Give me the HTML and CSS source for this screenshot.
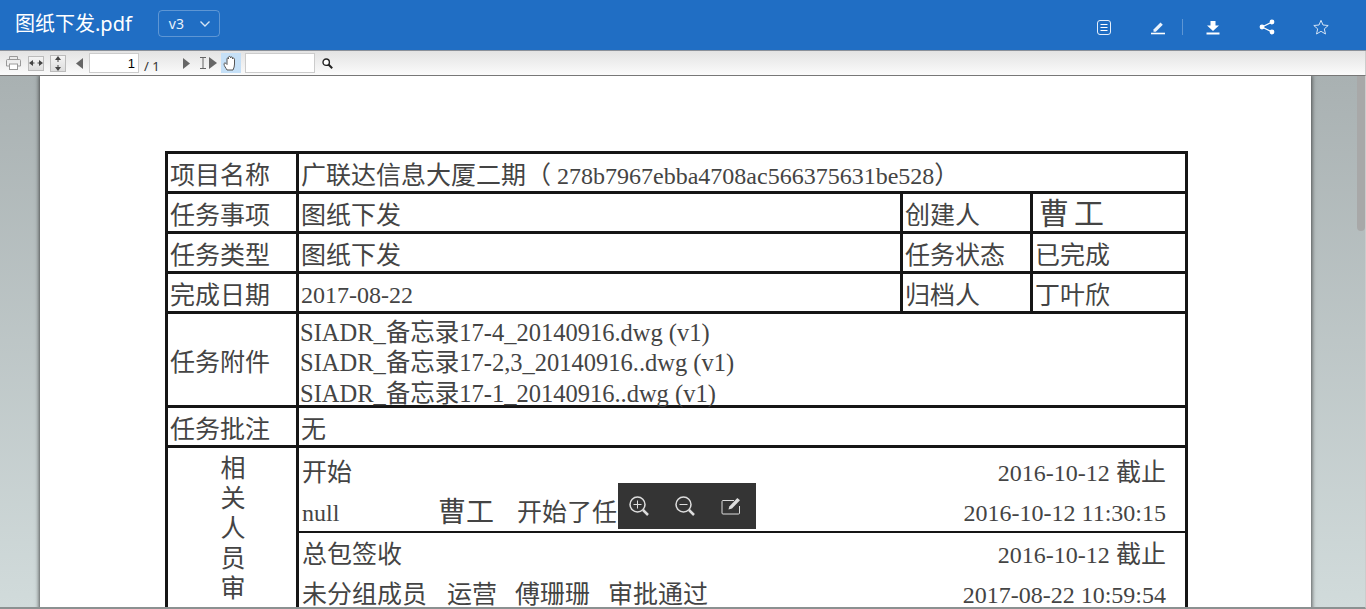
FILE: index.html
```html
<!DOCTYPE html>
<html lang="zh">
<head>
<meta charset="utf-8">
<title>图纸下发.pdf</title>
<link rel="stylesheet" href="styles.css">
</head>
<body>
<div class="app">
  <header class="topbar">
    <div class="doc-title">图纸下发.pdf</div>
    <div class="version"><span>v3</span>
      <svg class="chev" width="12" height="8" viewBox="0 0 12 8"><path d="M1.5 1.5 6 6l4.5-4.5" fill="none" stroke="#d5e4f5" stroke-width="1.4"/></svg>
    </div>
    <div class="actions">
      <svg class="act" width="16" height="16" viewBox="0 0 16 16"><rect x="1.5" y="1.5" width="13" height="14" rx="2.5" fill="none" stroke="#e4eefa" stroke-width="1"/><path d="M4.5 5.5h7M4.5 8.5h7M4.5 11.5h7" stroke="#fff" stroke-width="1"/></svg>
      <svg class="act" width="16" height="16" viewBox="0 0 16 16"><path d="M3.500 10.500 10.500 3.600l2.300 2.200-7 7H3.500z" fill="#eaf2fb"/><path d="M1 14.500h14" stroke="#fff" stroke-width="1.600"/></svg>
      <span class="divider"></span>
      <svg class="act" width="16" height="16" viewBox="0 0 16 16"><path d="M5.500 2h5v4.500H14L8 12 2 6.500h3.500z" fill="#fff"/><path d="M1.500 14.500h13" stroke="#fff" stroke-width="2"/></svg>
      <svg class="act" width="16" height="16" viewBox="0 0 16 16"><path d="M13 3 3 8l10 5" fill="none" stroke="#fff" stroke-width="1.200"/><circle cx="13" cy="3" r="2.400" fill="#fff"/><circle cx="3" cy="8" r="2.400" fill="#fff"/><circle cx="13" cy="13" r="2.400" fill="#fff"/></svg>
      <svg class="act" width="16" height="16" viewBox="0 0 16 16"><path d="M8 1.300 10 6l5.200.5-3.900 3.400 1.200 5.100L8 12.300 3.500 15l1.200-5.100L.8 6.500 6 6z" fill="none" stroke="#d5e4f5" stroke-width="1"/></svg>
    </div>
  </header>

  <div class="toolbar">
    <svg class="tool print" width="15" height="14" viewBox="0 0 15 14"><path d="M3.500 4V.5h8V4M3.500 10H.5V4.500a1 1 0 0 1 1-1h12a1 1 0 0 1 1 1V10h-3" fill="none" stroke="#999"/><rect x="3.500" y="8" width="8" height="5.500" fill="#fff" stroke="#999"/></svg>
    <span class="fit fit-w"><svg width="14" height="12" viewBox="0 0 14 12"><path d="M0 6l4-3v6zM14 6l-4-3v6z" fill="#444"/><path d="M4 6h1.500M8.500 6H10" stroke="#444"/></svg></span>
    <span class="fit fit-h"><svg width="12" height="15" viewBox="0 0 12 15"><path d="M6 0l3 4H3zM6 15l-3-4h6z" fill="#444"/><path d="M6 4v2M6 9v2" stroke="#444"/></svg></span>
    <svg class="tool prev" width="7" height="11" viewBox="0 0 7 11"><path d="M7 0v11L0 5.500z" fill="#666"/></svg>
    <input class="page-input" value="1" aria-label="页码">
    <span class="page-total">/ 1</span>
    <svg class="tool next" width="7" height="11" viewBox="0 0 7 11"><path d="M0 0v11l7-5.500z" fill="#666"/></svg>
    <svg class="tool select" width="18" height="12" viewBox="0 0 18 12"><path d="M1 .5h6M1 11.500h6M4 .5v11" fill="none" stroke="#666"/><path d="M10 0v12l8-6z" fill="#666"/></svg>
    <span class="hand"><svg width="16" height="16" viewBox="0 0 16 16"><path d="M4 15c-1-2-3-4-3-6 0-1 1-1.500 2-.5l1 1V4c0-1.500 1.500-1.500 1.500 0V2.500c0-1.500 2-1.500 2 0V3c0-1.500 2-1.500 2 0v1c0-1.200 2-1.200 2 .2V9c0 2-.5 4-1.500 6z" fill="#fff" stroke="#555"/></svg></span>
    <input class="search-input" aria-label="搜索">
    <svg class="tool lens" width="11" height="11" viewBox="0 0 11 11"><circle cx="4.200" cy="4.200" r="3.200" fill="#fff" stroke="#222" stroke-width="1.400"/><path d="M6.500 6.500 10.200 10.200" stroke="#222" stroke-width="2"/></svg>
  </div>

  <main class="viewer">
    <div class="sheet">
      <table class="task">
        <colgroup><col class="c1"><col class="c2"><col class="c3"><col class="c4"></colgroup>
        <tr class="r40"><td>项目名称</td><td colspan="3">广联达信息大厦二期（<span class="lat lat-paren">278b7967ebba4708ac566375631be528</span>）</td></tr>
        <tr class="r40"><td>任务事项</td><td>图纸下发</td><td>创建人</td><td class="sign">曹工</td></tr>
        <tr class="r40"><td>任务类型</td><td>图纸下发</td><td>任务状态</td><td>已完成</td></tr>
        <tr class="r40"><td>完成日期</td><td class="lat">2017-08-22</td><td>归档人</td><td>丁叶欣</td></tr>
        <tr class="r94"><td>任务附件</td><td colspan="3" class="files"><div class="file-list">SIADR_备忘录17-4_20140916.dwg (v1)<br>SIADR_备忘录17-2,3_20140916..dwg (v1)<br>SIADR_备忘录17-1_20140916..dwg (v1)</div></td></tr>
        <tr class="r40"><td>任务批注</td><td colspan="3">无</td></tr>
        <tr>
          <td class="vertical"><span>相</span><span>关</span><span>人</span><span>员</span><span>审</span></td>
          <td colspan="3" class="steps">
            <div class="step step-first">
              <div class="line"><span class="who"><span>开始</span></span><span><span class="lat">2016-10-12</span> 截止</span></div>
              <div class="line"><span class="who"><span class="group-null lat">null</span><span class="big">曹工</span><span>开始了任务</span></span><span class="lat">2016-10-12 11:30:15</span></div>
            </div>
            <div class="step">
              <div class="line"><span class="who"><span>总包签收</span></span><span><span class="lat">2016-10-12</span> 截止</span></div>
              <div class="line"><span class="who tight"><span>未分组成员</span><span>运营</span><span>傅珊珊</span><span>审批通过</span></span><span class="lat">2017-08-22 10:59:54</span></div>
            </div>
          </td>
        </tr>
      </table>
    </div>
    <div class="thumb"></div>
    <div class="float-tools">
      <svg width="22" height="22" viewBox="0 0 22 22"><circle cx="9.500" cy="9.500" r="7.500" fill="none" stroke="#ddd" stroke-width="1.500"/><path d="M9.500 5.500v8M5.500 9.500h8" stroke="#ddd"/><path d="M15 15 20 20" stroke="#ddd" stroke-width="2.500"/></svg>
      <svg width="22" height="22" viewBox="0 0 22 22"><circle cx="9.500" cy="9.500" r="7.500" fill="none" stroke="#ddd" stroke-width="1.500"/><path d="M5.500 9.500h8" stroke="#ddd"/><path d="M15 15 20 20" stroke="#ddd" stroke-width="2.500"/></svg>
      <svg width="22" height="22" viewBox="0 0 22 22"><path d="M14 5.500H3a1 1 0 0 0-1 1V18a1 1 0 0 0 1 1h15.500a1 1 0 0 0 1-1v-7" fill="none" stroke="#ddd" stroke-width="1"/><path d="M8.500 14.500l.8-3 8-8.500 2.700 2.300-8 8.300z" fill="#ddd"/></svg>
    </div>
  </main>
</div>
</body>
</html>
```

FILE: styles.css
```css
* { box-sizing: border-box; }
html, body { margin: 0; height: 100%; overflow: hidden; }
body { font-family: "Noto Sans", "Noto Sans CJK SC", sans-serif; }
.app { display: flex; flex-direction: column; height: 609px; }

.topbar { height: 51px; flex: none; background: #206ec4; color: #fff; display: flex; align-items: center; padding: 0 37px 0 15px; border-bottom: 1px solid #8a9099; }
.doc-title { font-size: 20px; line-height: 28px; margin-right: 26px; margin-top: -2px; }
.version { width: 62px; height: 27px; margin-top: -3px; border: 1px solid rgba(255,255,255,.28); border-radius: 4px; display: flex; align-items: center; padding-left: 10px; font-size: 14px; color: #eaf2fb; }
.chev { margin-left: 15px; }
.actions { margin-left: auto; display: flex; align-items: center; margin-top: 4px; }
.act { flex: none; margin-left: 38px; }
.actions .act:first-child { margin-left: 1px; }
.divider { width: 1px; height: 16px; background: rgba(255,255,255,.28); margin-left: 16px; margin-right: -16px; }

.toolbar { height: 25px; flex: none; display: flex; align-items: center; background: linear-gradient(#e3e3e3, #fbfbfb); border-bottom: 1px solid #777; border-right: 1px solid #ccc; padding-left: 6px; font-size: 12px; }
.tool { flex: none; }
.fit { width: 16px; background: linear-gradient(#f4f4f4, #ddd); border: 1px solid #bbb; display: flex; align-items: center; justify-content: center; flex: none; }
.fit-w { margin-left: 7px; height: 15px; }
.fit-h { margin-left: 6px; height: 17px; }
.prev { margin-left: 10px; }
.page-input { width: 50px; height: 20px; margin-left: 6px; padding: 0 3px; border: 1px solid #ccc; background: #fff; text-align: right; font: 13px "Liberation Sans", sans-serif; color: #000; }
.page-total { width: 44px; padding: 6px 0 0 5px; color: #333; font-size: 13px; }
.select { margin-left: 9px; }
.hand { width: 20px; height: 20px; margin-left: 4px; background: #c5e0f7; display: flex; align-items: center; justify-content: center; }
.search-input { width: 70px; height: 20px; margin-left: 4px; border: 1px solid #ccc; background: #fff; }
.lens { margin-left: 7px; }

.viewer { flex: 1; min-height: 0; position: relative; overflow: hidden; background: linear-gradient(#a9b1b2, #d1dbdb); border-bottom: 2px solid #8b9191; padding: 0 55px 0 40px; border-right: 1px solid #ccc; }
.sheet { background: #fff; width: 1271px; min-height: 700px; padding: 75px 0 0 125px; box-shadow: 0 0 4px 1px rgba(40,40,40,.75); }
.thumb { position: absolute; right: 0; top: 0; width: 8px; height: 155px; background: #a8a8a8; border-radius: 0 0 4px 4px; }

.task { table-layout: fixed; width: 1020px; border-collapse: collapse; font-family: "Liberation Serif", "Noto Sans CJK SC", serif; font-size: 25px; color: #444; }
.c1 { width: 131px; } .c2 { width: 604px; } .c3 { width: 130px; } .c4 { width: 155px; }
.task td { border: 3px solid #151515; padding: 6px 2px 0 2px; line-height: 30px; white-space: nowrap; vertical-align: middle; }
.lat { font-size: 24px; }
.task td.lat { font-size: 24px; padding-top: 4px; }
.lat-paren { margin-left: 6px; }
.r40 { height: 40px; }
.r94 { height: 94px; }
.task .files { padding: 0 0 0 1px; font-size: 24.500px; }
.file-list { height: 84px; line-height: 30.500px; }
.task .sign { font-size: 30px; padding: 3px 0 0 6px; letter-spacing: 5px; }
.task .vertical { vertical-align: top; text-align: center; padding: 6px 0 0 2px; }
.vertical span { display: block; }
.task .steps { padding: 0; vertical-align: top; }
.step { padding: 0 19px 0 3px; border-bottom: 2px solid #151515; }
.step-first { padding-top: 3px; }
.line { height: 40px; padding-top: 4px; display: flex; justify-content: space-between; align-items: center; }
.who { display: flex; align-items: center; }
.who > span { margin-right: 18px; }
.who > span:first-child { margin-right: 20px; }
.who .group-null { width: 116px; }
.who .big { font-size: 28px; margin-right: 23px; }

.float-tools { position: absolute; left: 618px; top: 407px; width: 138px; height: 46px; background: #343434; display: flex; align-items: center; justify-content: space-between; padding: 0 14px 0 10px; }
```
